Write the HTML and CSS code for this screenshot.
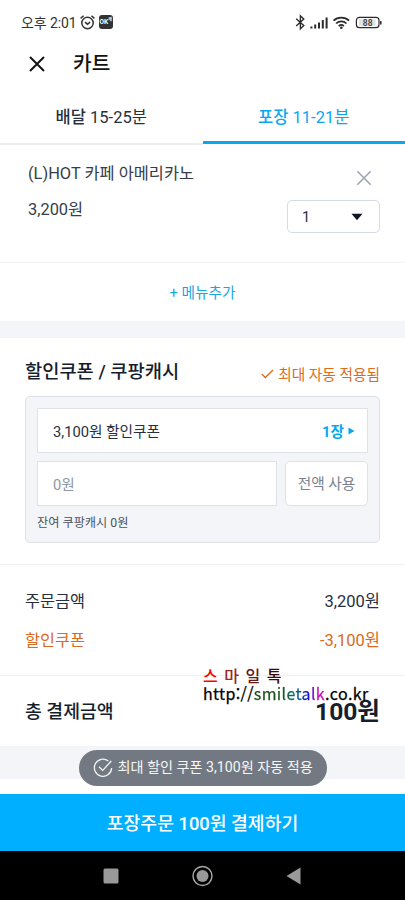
FILE: index.html
```html
<!DOCTYPE html>
<html lang="ko">
<head>
<meta charset="utf-8">
<title>카트</title>
<link rel="stylesheet" href="styles.css">
</head>
<body>
<div class="screen">
  <div class="status">
    <span class="clock">오후 2:01</span>
    <svg class="alarm" width="15" height="15" viewBox="0 0 15 15" fill="none" stroke="#333" stroke-width="1.500"><circle cx="7.500" cy="8" r="5.700"/><path d="M.6 3.400 3.600.8M14.400 3.400 11.400.8M5 7.200l2.500 2 2.600-2"/></svg>
    <span class="ok">OK<sup>캐</sup></span>
    <svg class="signals" width="90" height="18" viewBox="0 0 90 18" fill="none" stroke="#2b2b2b">
      <path d="M3.200 5.800 10.800 12.600 7.400 15.900V2.800L10.800 6.100 3.200 13.100" stroke-width="1.400"/>
      <path d="M18.400 15.500v-2M22.200 15.500v-4M26 15.500V9.500M29.800 15.500V7M33.600 15.500V4.500" stroke-width="2"/>
      <path d="M40.500 7.600a11.500 11.500 0 0 1 15.600 0M43.100 10.500a7.600 7.600 0 0 1 10.400 0M45.700 13.100a3.800 3.800 0 0 1 5.200 0" stroke-width="1.700"/><circle cx="48.300" cy="14.700" r="1.300" fill="#2b2b2b" stroke="none"/>
      <rect x="63.400" y="4.300" width="22.600" height="10.400" rx="3" stroke-width="1.200"/><rect x="66" y="6.300" width="16.500" height="6.500" fill="#e2e2e2" stroke="none"/><path d="M87.800 8v3.500" stroke-width="1.500"/>
      <text class="battery" x="74.700" y="12.500" text-anchor="middle">88</text>
    </svg>
  </div>
  <header class="header">
    <svg width="16" height="16" viewBox="0 0 16 16" stroke="#111" stroke-width="1.900"><path d="M1 1 15 15M15 1 1 15"/></svg>
    <h1>카트</h1>
  </header>
  <nav class="tabs">
    <div class="tab"><b>배달</b> 15-25분</div>
    <div class="tab active"><b>포장</b> 11-21분</div>
  </nav>
  <section class="item">
    <div class="info"><div class="name">(L)HOT 카페 아메리카노</div><div class="price">3,200원</div></div>
    <div class="controls">
      <svg class="remove" width="16" height="16" viewBox="0 0 16 16" stroke="#9ea5b5" stroke-width="1.600"><path d="M1.300 1.300 14.700 14.700M14.700 1.300 1.300 14.700"/></svg>
      <div class="quantity"><span>1</span><svg width="12" height="8" viewBox="0 0 12 8"><path d="M.5.800h11L6 7.200z" fill="#101923"/></svg></div>
    </div>
  </section>
  <div class="add">+ 메뉴추가</div>
  <div class="band"></div>
  <section class="coupons">
    <div class="coupon-head">
      <h2>할인쿠폰 / 쿠팡캐시</h2>
      <div class="applied"><svg width="13" height="10" viewBox="0 0 13 10" fill="none" stroke="#da6b20" stroke-width="1.300"><path d="M.8 5 4.300 8.500 12 1"/></svg><span>최대 자동 적용됨</span></div>
    </div>
    <div class="panel">
      <div class="field coupon"><span>3,100원 할인쿠폰</span><span class="count">1장<svg width="7" height="8" viewBox="0 0 7 8"><path d="M.5.500v7L6.500 4z" fill="#0ca6e9"/></svg></span></div>
      <div class="cash"><div class="field amount">0원</div><div class="use">전액 사용</div></div>
      <div class="balance">잔여 쿠팡캐시 0원</div>
    </div>
  </section>
  <section class="summary">
    <div class="row"><span>주문금액</span><span class="value">3,200원</span></div>
    <div class="row discount"><span>할인쿠폰</span><span class="value">-3,100원</span></div>
  </section>
  <section class="total">
    <span>총 결제금액</span><strong>100원</strong>
    <div class="watermark">
      <div class="mark-name"><span class="m1">스</span><span class="m2">마</span><span class="m3">일</span><span class="m4">톡</span></div>
      <div class="mark-url">http://<span class="gradient">smiletalk</span>.co.kr</div>
    </div>
  </section>
  <div class="bottom-band">
    <div class="toast"><svg width="20" height="20" viewBox="0 0 20 20" fill="none" stroke="#f4f5f6" stroke-width="1.300"><path d="M15.300 3A8.600 8.600 0 1 0 18.600 10M6 8.700l3.700 3.700L18.300 3"/></svg><span>최대 할인 쿠폰 3,100원 자동 적용</span></div>
  </div>
  <div class="pay">포장주문 100원 결제하기</div>
  <footer class="system">
    <svg width="22" height="22" viewBox="0 0 22 22"><rect x="3.500" y="3.500" width="15" height="15" rx="1.500" fill="#999"/></svg>
    <svg width="22" height="22" viewBox="0 0 22 22"><circle cx="10.500" cy="11" r="9.500" fill="none" stroke="#aaa" stroke-width="1.400"/><circle cx="10.500" cy="11" r="6" fill="#999"/></svg>
    <svg width="22" height="22" viewBox="0 0 22 22"><path d="M3.500 11 17.500 2.500v17z" fill="#999"/></svg>
  </footer>
</div>
</body>
</html>
```
FILE: styles.css
```css
* { box-sizing: border-box; }
body { margin: 0; background: #fff; font-family: Roboto, "Noto Sans CJK KR", sans-serif; color: #27303c; }
h1, h2 { margin: 0; }
svg { display: block; flex-shrink: 0; }
.screen { width: 405px; height: 900px; overflow: hidden; display: flex; flex-direction: column; white-space: nowrap; }
.screen > * { flex-shrink: 0; }
.status { height: 45px; padding: 13px 22px 0 21px; display: flex; align-items: flex-start; color: #333; }
.clock { font-size: 14px; line-height: 20px; letter-spacing: -.1px; }
.alarm { margin: 2px 0 0 3px; }
.ok { width: 14px; height: 14px; margin: 2px 0 0 4px; border-radius: 3px; background: #333; color: #fff; font-size: 6.5px; line-height: 15px; font-weight: 700; padding-left: 1px; }
.ok sup { font-size: 4px; line-height: 1px; }
.signals { margin: 0 0 0 auto; }
.battery { font: 500 8.5px Roboto, sans-serif; fill: #333; stroke: none; }
.header { height: 47px; padding: 0 29px; display: flex; align-items: flex-start; gap: 28px; }
.header svg { margin-top: 11px; }
.header h1 { font-size: 20.300px; line-height: 39px; font-weight: 500; color: #111; }
.tabs { height: 53px; display: flex; }
.tab { flex: 1; border-bottom: 2px solid #ebedef; text-align: center; font-size: 16.500px; line-height: 51px; height: 53px; }
.tab b { font-weight: 500; }
.tab.active { border-bottom: 3px solid #0ca6ef; color: #0ca6ef; height: 52px; }
.item { height: 118px; padding: 17px 25px 0 28px; display: flex; justify-content: space-between; border-bottom: 1px solid #f1f2f4; }
.info { font-size: 16.400px; line-height: 24px; color: #353d48; }
.price { margin-top: 12px; }
.controls { width: 93px; display: flex; flex-direction: column; align-items: flex-end; }
.remove { margin: 8px 8px 14px 0; }
.quantity { width: 93px; height: 33px; border: 1px solid #d5dae3; border-radius: 5px; padding: 0 16px 0 14px; display: flex; align-items: center; justify-content: space-between; font-size: 14.500px; }
.quantity span { padding-top: 1px; }
.add { height: 58px; line-height: 60px; text-align: center; font-size: 14.700px; font-weight: 400; color: #16a7df; }
.band { height: 17px; background: #f4f5f8; }
.coupons { height: 227px; padding: 20px 25px 0; border-bottom: 1px solid #eff1f3; }
.coupon-head { height: 38px; display: flex; justify-content: space-between; }
.coupon-head h2 { font-size: 18.700px; line-height: 29px; font-weight: 500; color: #151e2b; }
.applied { display: flex; align-items: flex-start; gap: 4px; font-size: 14.700px; line-height: 34px; color: #da6b20; }
.applied svg { margin-top: 11px; }
.panel { height: 147px; border: 1px solid #dee1e7; border-radius: 5px; background: #f4f5f8; padding: 11px; }
.field { height: 45px; background: #fff; border: 1px solid #dfe2e8; display: flex; align-items: center; padding: 0 12px 0 15px; font-size: 14.700px; }
.coupon { justify-content: space-between; }
.count { display: flex; align-items: center; gap: 4px; font-weight: 700; color: #0ca6e9; }
.cash { margin-top: 8px; display: flex; gap: 8px; }
.amount { flex: 1; color: #8d98a4; }
.use { width: 83px; height: 45px; background: #fff; border: 1px solid #dfe2e8; border-radius: 5px; text-align: center; line-height: 45px; font-size: 14.700px; color: #78828f; }
.balance { font-size: 12.200px; line-height: 20px; margin-top: 7px; color: #4b535f; }
.summary { height: 111px; padding: 17px 25px 0; border-bottom: 1px solid #eff1f3; font-size: 16.300px; line-height: 39px; }
.row { display: flex; justify-content: space-between; }
.value { font-size: 16.500px; }
.discount { color: #da6b20; }
.total { position: relative; height: 70px; padding: 0 25px; display: flex; justify-content: space-between; font-size: 18.300px; line-height: 72px; font-weight: 500; color: #151e2b; }
.total strong { font-size: 24.600px; font-weight: 700; }
.watermark { position: absolute; left: 203px; top: -11px; font-family: "Noto Sans CJK KR", sans-serif; font-weight: 400; color: #000; }
.mark-name { display: flex; gap: 6.500px; font-size: 16px; line-height: 20px; font-weight: 500; }
.m1 { color: #f00; }
.m2 { color: #9c2525; }
.m3 { color: #651818; }
.m4 { color: #3b0909; }
.mark-url { font-size: 16px; line-height: 17px; letter-spacing: .35px; -webkit-text-stroke: .25px; }
.gradient { color: transparent; background: linear-gradient(90deg, #174b10, #17551b 38%, #087070 58%, #0715cc 75%, #cc08bd 90%); background-clip: text; }
.bottom-band { height: 48px; border-bottom: 15px solid #fff; background: #f4f5f8; display: flex; justify-content: center; align-items: flex-start; }
.toast { width: 248px; height: 36px; margin-top: 4px; border-radius: 18px; background: #737982; color: #f6f7f8; padding: 0 14px; display: flex; align-items: center; gap: 5px; font-size: 14.150px; position: relative; }
.toast span { margin-top: -4px; }
.pay { height: 57px; line-height: 59px; text-align: center; background: #00afff; color: #fff; font-size: 18.300px; font-weight: 500; }
.system { height: 49px; padding: 0 100px; background: #000; display: flex; align-items: center; justify-content: space-between; }
```
